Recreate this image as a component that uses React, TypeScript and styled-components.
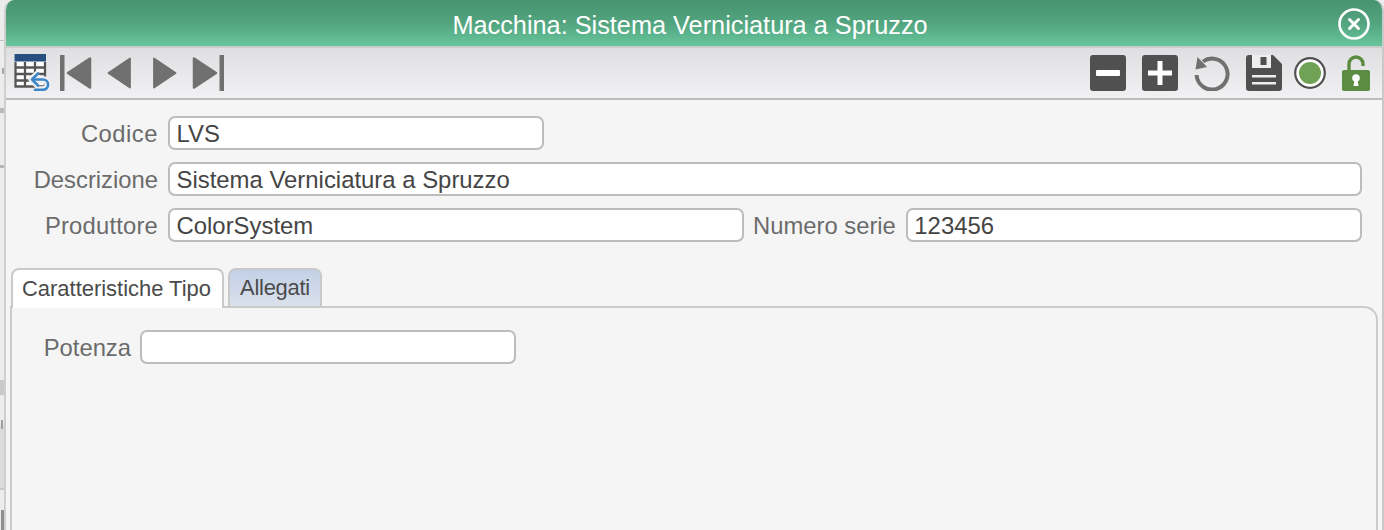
import React from 'react';
import styled, { createGlobalStyle } from 'styled-components';

const GlobalStyle = createGlobalStyle`
  html, body {
    margin: 0;
    height: 100%;
    overflow: hidden;
    background: #ececec;
  }
  #root {
    height: 100%;
  }
`;

// the blurred page behind the dialog only shows in the 4px strip on the left
const Page = styled.div`
  background-color: #ececec;
  background-image:
    linear-gradient(#c4c4c4, #c4c4c4),
    linear-gradient(#c9c9c9, #c9c9c9),
    linear-gradient(#a8a8a8, #a8a8a8),
    linear-gradient(#b8b8b8, #b8b8b8),
    linear-gradient(#a0a0a0, #a0a0a0),
    linear-gradient(#b4b4b4, #b4b4b4),
    linear-gradient(#dcdcdc, #dcdcdc),
    linear-gradient(#c8c8c8, #c8c8c8),
    linear-gradient(#8f8f8f, #8f8f8f);
  background-position:
    0 40px,
    0 380px,
    2px 68px,
    0 108px,
    1px 420px,
    0 165px,
    0 425px,
    0 488px,
    1px 510px;
  background-repeat: no-repeat;
  background-size:
    4px 1px,
    4px 15px,
    2px 6px,
    4px 5px,
    2px 9px,
    4px 3px,
    4px 63px,
    4px 2px,
    3px 20px;
  box-sizing: border-box;
  display: flex;
  font-family: 'Liberation Sans', Arial, sans-serif;
  height: 530px;
  padding: 0 0 0 4px;
  width: 1384px;
`;

const Dialog = styled.div`
  background: #f5f5f5;
  border-left: 2px solid #cfcfcf;
  border-radius: 10px 10px 0 0;
  border-right: 2px solid #c9c9c9;
  display: flex;
  flex-direction: column;
  flex-grow: 1;
  overflow: hidden;
`;

const TitleBar = styled.div`
  align-items: center;
  background: linear-gradient(180deg, #47936f 0%, #52a47f 50%, #67c59c 100%);
  color: #fff;
  display: grid;
  flex: 0 0 46px;
  font-size: 25.3px;
  grid-template-columns: 36px 1fr 44px;
  text-align: center;
`;

const Title = styled.span`
  grid-column: 2;
  padding-top: 4px;
`;

const CloseButton = styled.svg`
  grid-column: 3;
  height: 34px;
  margin-left: -1px;
  margin-top: 2px;
  width: 34px;
`;

const Toolbar = styled.div`
  align-items: center;
  background: linear-gradient(180deg, #dfdfe1 0%, #f1f1f3 100%);
  border-bottom: 2px solid #bdbdbd;
  border-top: 2px solid #cbcbcb;
  box-sizing: border-box;
  display: flex;
  flex: 0 0 54px;
  justify-content: space-between;
  padding: 0 12px 0 8px;
`;

const IconGroup = styled.div`
  align-items: center;
  display: flex;
`;

const ToolIcon = styled.svg<{ $gap?: number }>`
  display: block;
  margin-left: ${(p) => p.$gap ?? 0}px;
`;

const Form = styled.div`
  display: flex;
  flex-direction: column;
  gap: 12px;
  padding: 16px 20px 0 0;
`;

const Row = styled.div<{ $gap?: number }>`
  align-items: center;
  display: flex;
  gap: ${(p) => p.$gap ?? 10}px;
`;

const Label = styled.label<{ $width?: number; $track?: number; $pull?: number }>`
  color: #6b6b6b;
  flex: 0 0 auto;
  font-size: 23.8px;
  letter-spacing: ${(p) => p.$track ?? 0}px;
  margin-left: ${(p) => -(p.$pull ?? 0)}px;
  padding-top: 1px;
  text-align: right;
  width: ${(p) => (p.$width ? `${p.$width}px` : 'auto')};
`;

const Field = styled.input<{ $width?: number }>`
  background: #fff;
  border: 2px solid #bcbcbc;
  border-radius: 7px;
  box-sizing: border-box;
  color: #454545;
  flex: ${(p) => (p.$width ? `0 0 ${p.$width}px` : '1 1 0')};
  font-family: inherit;
  font-size: 23.9px;
  height: 34px;
  min-width: 0;
  outline: none;
  padding: 2px 6px 0 6.5px;
`;

const TabStrip = styled.div`
  align-items: flex-end;
  display: flex;
  gap: 4px;
  margin-top: 26px;
  padding-left: 5px;
`;

const Tab = styled.div<{ $active?: boolean }>`
  align-items: center;
  background: ${(p) => (p.$active ? '#fff' : 'linear-gradient(180deg, #c3d0e6 0%, #dbe1ec 100%)')};
  border: 2px solid #c9c9c9;
  border-bottom: none;
  border-radius: 8px 8px 0 0;
  box-sizing: border-box;
  color: #4a4a4a;
  display: flex;
  font-size: 21.95px;
  height: ${(p) => (p.$active ? 40 : 38)}px;
  letter-spacing: ${(p) => (p.$active ? 0 : -0.25)}px;
  margin-bottom: ${(p) => (p.$active ? -2 : 0)}px;
  padding: 0 ${(p) => (p.$active ? 11 : 10)}px 0 ${(p) => (p.$active ? 9 : 10)}px;
  position: relative;
  z-index: ${(p) => (p.$active ? 1 : 0)};
`;

const TabPanel = styled.div`
  border: 2px solid #cbcbcb;
  border-bottom: none;
  border-radius: 0 14px 0 0;
  display: flex;
  flex-direction: column;
  flex-grow: 1;
  margin: 0 4px;
  padding: 22px 0 0;
`;

const TableIcon = () => (
  <ToolIcon width="37" height="38" viewBox="0 0 37 38">
    <rect x="0.500" y="0" width="31.500" height="33.500" fill="#fff" />
    <rect x="0.500" y="0" width="31.500" height="7.500" fill="#27507f" />
    <path d="M1.500 8v24.500h29.500V8M1.500 13.500h29.500M1.500 20h29.500M1.500 26.500h29.500M11 8v24.500M21 8v24.500" fill="none" stroke="#555" strokeWidth="2.300" />
    <path d="M19 25.500h10a5 5 0 0 1 0 10.200h-8M24 19.500 18 25.500l6 6" fill="none" stroke="#f0f0f2" strokeWidth="7" strokeLinejoin="round" />
    <path d="M19 25.500h10a5 5 0 0 1 0 10.200h-8" fill="none" stroke="#3d87c8" strokeWidth="2.600" strokeLinecap="round" />
    <path d="M24 19.500 18 25.500l6 6" fill="none" stroke="#3d87c8" strokeWidth="2.600" strokeLinecap="round" strokeLinejoin="round" />
  </ToolIcon>
);

const FirstIcon = () => (
  <ToolIcon $gap={9} width="32" height="36" viewBox="0 0 32 36">
    <rect x="0" y="0" width="4.500" height="36" fill="#707070" />
    <path d="M8 18 30 3.500V32.500Z" fill="#707070" stroke="#707070" strokeWidth="2.500" strokeLinejoin="round" />
  </ToolIcon>
);

const PrevIcon = () => (
  <ToolIcon $gap={15} width="24" height="32" viewBox="0 0 24 32">
    <path d="M1.500 16 23 1.500V30.500Z" fill="#707070" stroke="#707070" strokeWidth="1.800" strokeLinejoin="round" />
  </ToolIcon>
);

const NextIcon = () => (
  <ToolIcon $gap={22} width="24" height="32" viewBox="0 0 24 32">
    <path d="M22.500 16 1 1.500V30.500Z" fill="#707070" stroke="#707070" strokeWidth="1.800" strokeLinejoin="round" />
  </ToolIcon>
);

const LastIcon = () => (
  <ToolIcon $gap={15} width="32" height="36" viewBox="0 0 32 36">
    <rect x="27.500" y="0" width="4.500" height="36" fill="#707070" />
    <path d="M24 18 2 3.500V32.500Z" fill="#707070" stroke="#707070" strokeWidth="2.500" strokeLinejoin="round" />
  </ToolIcon>
);

const MinusIcon = () => (
  <ToolIcon width="36" height="36" viewBox="0 0 36 36">
    <rect width="36" height="36" rx="3" fill="#505050" />
    <rect x="6" y="15" width="24" height="6" rx="1" fill="#fff" />
  </ToolIcon>
);

const PlusIcon = () => (
  <ToolIcon $gap={16} width="36" height="36" viewBox="0 0 36 36">
    <rect width="36" height="36" rx="3" fill="#505050" />
    <path d="M6 15.500h9.500V6h5v9.500H30v5h-9.500V30h-5v-9.500H6Z" fill="#fff" />
  </ToolIcon>
);

const ReloadIcon = () => (
  <ToolIcon $gap={16} width="36" height="36" viewBox="0 0 36 36">
    <path d="M9 6.500A15.500 15.500 0 1 1 2.600 20" fill="none" stroke="#707070" strokeWidth="4" />
    <path d="M1.500 14.500 3.500 2 13 12Z" fill="#707070" />
  </ToolIcon>
);

const SaveIcon = () => (
  <ToolIcon $gap={16} width="36" height="36" viewBox="0 0 36 36">
    <path d="M3 0H27L36 9V33a3 3 0 0 1-3 3H3a3 3 0 0 1-3-3V3a3 3 0 0 1 3-3Z" fill="#505050" />
    <rect x="6" y="0" width="19" height="13" fill="#eeeeef" />
    <rect x="14.500" y="2" width="6" height="8" fill="#505050" />
    <rect x="6" y="20" width="24" height="2.500" fill="#eeeeef" />
    <rect x="6" y="27" width="24" height="2.500" fill="#eeeeef" />
  </ToolIcon>
);

const RecordIcon = () => (
  <ToolIcon $gap={12} width="32" height="32" viewBox="0 0 32 32">
    <circle cx="16" cy="16" r="14.800" fill="#fff" stroke="#505050" strokeWidth="2.200" />
    <circle cx="16" cy="16" r="11" fill="#6fa255" />
  </ToolIcon>
);

const LockIcon = () => (
  <ToolIcon $gap={16} width="28" height="36" viewBox="0 0 28 36">
    <path d="M7 15V9a7 7 0 0 1 14 0v2" fill="none" stroke="#5b8c42" strokeWidth="3.400" />
    <rect x="0" y="15" width="28" height="21" rx="2" fill="#5b8c42" />
    <circle cx="14" cy="23" r="3.800" fill="#fff" />
    <path d="M12.500 24h3l1 7h-5Z" fill="#fff" />
  </ToolIcon>
);

const App: React.FunctionComponent = () => {
  return (
    <Page>
      <GlobalStyle />
      <Dialog>
        <TitleBar>
          <Title>Macchina: Sistema Verniciatura a Spruzzo</Title>
          <CloseButton viewBox="0 0 34 34">
            <circle cx="17" cy="17" r="14.500" fill="none" stroke="#fff" strokeWidth="2.600" />
            <path d="M12.500 12.500 21.500 21.500M21.500 12.500 12.500 21.500" stroke="#fff" strokeWidth="3" strokeLinecap="round" />
          </CloseButton>
        </TitleBar>
        <Toolbar>
          <IconGroup>
            <TableIcon />
            <FirstIcon />
            <PrevIcon />
            <NextIcon />
            <LastIcon />
          </IconGroup>
          <IconGroup>
            <MinusIcon />
            <PlusIcon />
            <ReloadIcon />
            <SaveIcon />
            <RecordIcon />
            <LockIcon />
          </IconGroup>
        </Toolbar>
        <Form>
          <Row>
            <Label $width={152} $track={0.5}>Codice</Label>
            <Field $width={376} readOnly value="LVS" />
          </Row>
          <Row>
            <Label $width={152}>Descrizione</Label>
            <Field readOnly value="Sistema Verniciatura a Spruzzo" />
          </Row>
          <Row>
            <Label $width={152} $track={0.2}>Produttore</Label>
            <Field $width={576} readOnly value="ColorSystem" />
            <Label $pull={1}>Numero serie</Label>
            <Field readOnly value="123456" />
          </Row>
        </Form>
        <TabStrip>
          <Tab $active>Caratteristiche Tipo</Tab>
          <Tab>Allegati</Tab>
        </TabStrip>
        <TabPanel>
          <Row $gap={9}>
            <Label $width={119}>Potenza</Label>
            <Field $width={376} readOnly value="" />
          </Row>
        </TabPanel>
      </Dialog>
    </Page>
  );
};

export default App;
